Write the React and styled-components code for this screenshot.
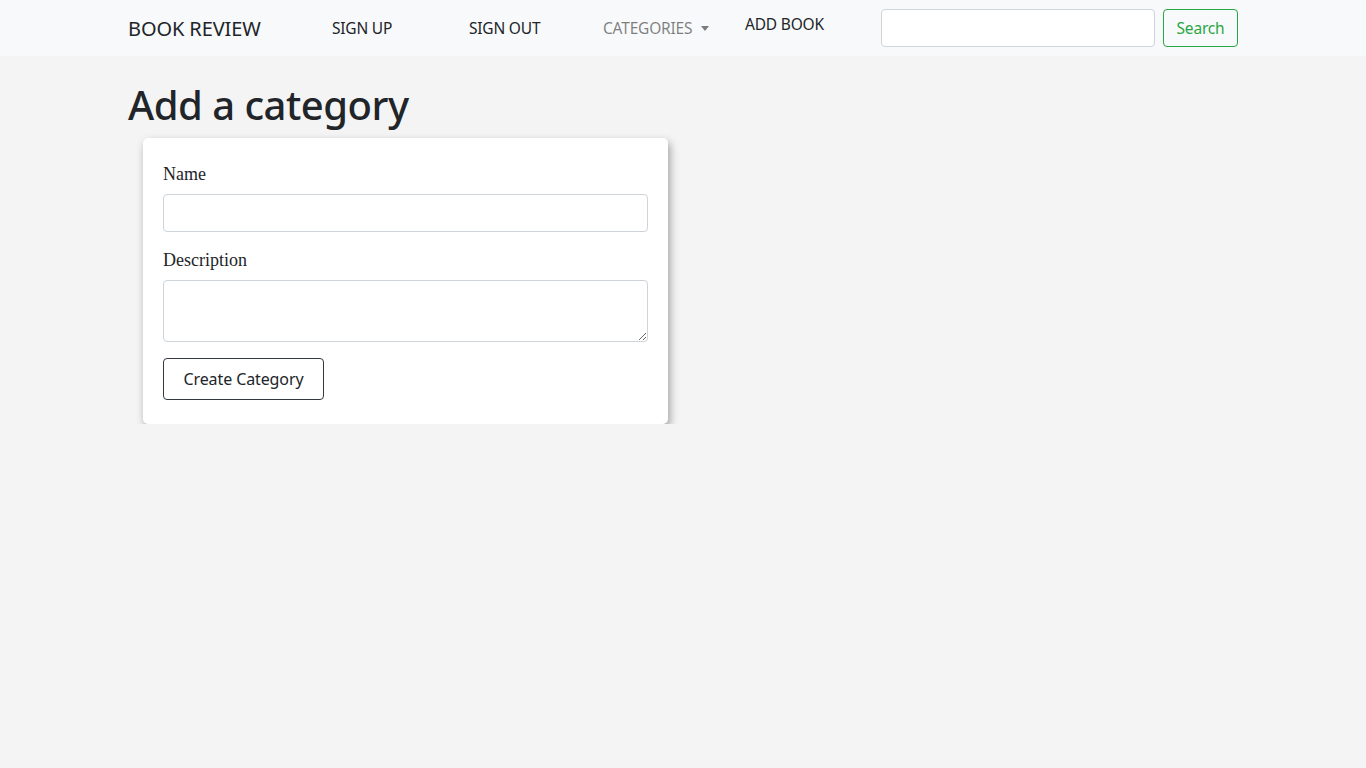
import React from 'react';
import styled, { createGlobalStyle } from 'styled-components';

const GlobalStyle = createGlobalStyle`
  * { box-sizing: border-box; }
  body {
    margin: 0;
    background: #f4f4f4;
    font-family: 'Noto Sans', 'Open Sans', sans-serif;
    color: #212529;
  }
`;

const Navbar = styled.nav`
  background: #f8f9fa;
  height: 56px;
`;

const NavInner = styled.div`
  width: 1110px;
  margin: 0 auto;
  height: 100%;
  display: flex;
  align-items: center;
`;

const Brand = styled.a`
  width: 204px;
  font-size: 20px;
  letter-spacing: -0.1px;
  color: #212529;
  text-decoration: none;
`;

const NavLink = styled.a`
  width: ${(p) => p.w}px;
  font-size: 15.5px;
  letter-spacing: -0.2px;
  color: ${(p) => (p.muted ? 'rgba(0, 0, 0, 0.5)' : '#212529')};
  text-decoration: none;
  display: flex;
  align-items: center;
  transform: translateY(${(p) => p.up || 0}px);
`;

const Caret = styled.span`
  margin-left: 9px;
  width: 0;
  height: 0;
  border-left: 4.5px solid transparent;
  border-right: 4.5px solid transparent;
  border-top: 5px solid rgba(0, 0, 0, 0.5);
`;

const SearchForm = styled.form`
  margin-left: auto;
  display: flex;
  gap: 8px;
`;

const SearchInput = styled.input`
  width: 274px;
  height: 38px;
  border: 1px solid #ced4da;
  border-radius: 4px;
  background: #fff;
`;

const SearchButton = styled.button`
  width: 75px;
  height: 38px;
  border: 1px solid #28a745;
  border-radius: 4px;
  background: transparent;
  color: #28a745;
  font-family: inherit;
  font-size: 15.5px;
  letter-spacing: -0.2px;
`;

const Main = styled.main`
  width: 1110px;
  margin: 0 auto;
`;

const Title = styled.h1`
  margin: 25px 0 9px;
  font-size: 40px;
  font-weight: 500;
  letter-spacing: -0.5px;
  line-height: 1.2;
`;

const Card = styled.div`
  margin-left: 15px;
  width: 525px;
  background: #fff;
  border-radius: 5px;
  padding: 24px 20px 24px;
  box-shadow: 2px 4px 9px rgba(0, 0, 0, 0.35);
`;

const Field = styled.div`
  margin-bottom: 16px;
`;

const Label = styled.label`
  display: block;
  font-family: 'Liberation Serif', 'DejaVu Serif', serif;
  font-size: 18px;
  line-height: 24px;
  color: #212529;
  margin-bottom: 8px;
`;

const Input = styled.input`
  display: block;
  width: 100%;
  height: 38px;
  border: 1px solid #ced4da;
  border-radius: 4px;
  background: #fff;
`;

const TextArea = styled.textarea`
  display: block;
  width: 100%;
  height: 62px;
  border: 1px solid #ced4da;
  border-radius: 4px;
  background: #fff;
  resize: vertical;
`;

const SubmitButton = styled.button`
  width: 161px;
  height: 42px;
  border: 1px solid #343a40;
  border-radius: 4px;
  background: #fff;
  color: #212529;
  font-family: 'Noto Sans', sans-serif;
  font-size: 16px;
  letter-spacing: -0.1px;
`;

const App = () => (
  <>
    <GlobalStyle />
    <Navbar>
      <NavInner>
        <Brand href="#">BOOK REVIEW</Brand>
        <NavLink w={137} href="#">SIGN UP</NavLink>
        <NavLink w={134} href="#">SIGN OUT</NavLink>
        <NavLink w={142} href="#" muted>
          CATEGORIES
          <Caret />
        </NavLink>
        <NavLink w={100} href="#" up={-4}>ADD BOOK</NavLink>
        <SearchForm onSubmit={(e) => e.preventDefault()}>
          <SearchInput type="search" />
          <SearchButton type="submit">Search</SearchButton>
        </SearchForm>
      </NavInner>
    </Navbar>
    <Main>
      <Title>Add a category</Title>
      <Card>
        <Field>
          <Label>Name</Label>
          <Input type="text" />
        </Field>
        <Field>
          <Label>Description</Label>
          <TextArea />
        </Field>
        <SubmitButton type="button">Create Category</SubmitButton>
      </Card>
    </Main>
  </>
);

export default App;
